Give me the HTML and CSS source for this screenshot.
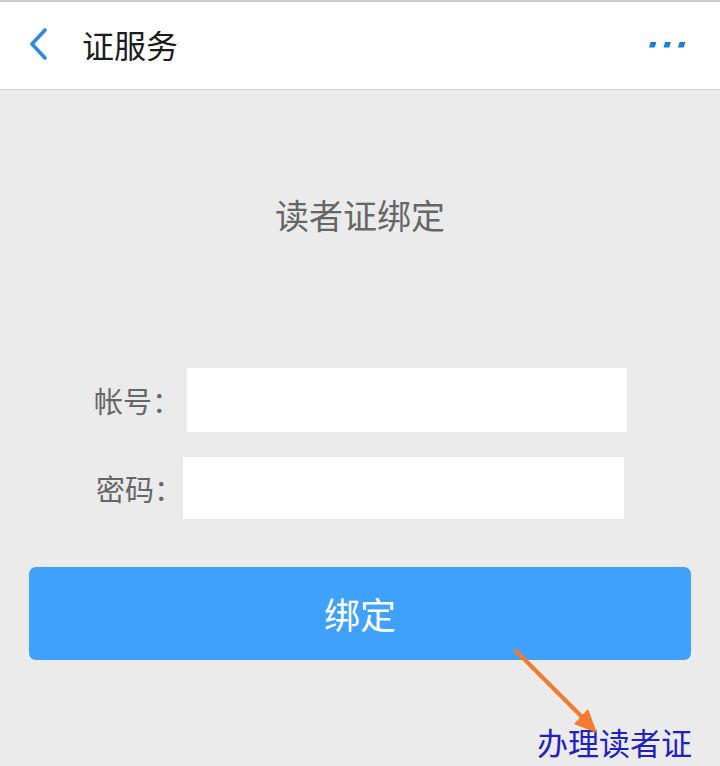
FILE: index.html
```html
<!DOCTYPE html>
<html lang="zh-CN">
<head>
<meta charset="utf-8">
<title>证服务</title>
<link rel="stylesheet" href="styles.css">
</head>
<body>
<div class="page">
  <header class="topbar">
    <svg class="back" width="20" height="32" viewBox="0 0 20 32" aria-hidden="true">
      <polyline points="16,2 3,16 16,30" fill="none" stroke="#2a8be2" stroke-width="3.6" stroke-linecap="round" stroke-linejoin="round"/>
    </svg>
    <h1 class="topbar-title">证服务</h1>
    <svg class="more" width="38" height="6" viewBox="0 0 38 6" aria-hidden="true">
      <polygon points="1.6,0 7.4,0 5.8,5.4 0,5.4" fill="#1b7fd8"/>
      <polygon points="16.1,0 21.9,0 20.3,5.4 14.5,5.4" fill="#1b7fd8"/>
      <polygon points="30.6,0 36.4,0 34.8,5.4 29,5.4" fill="#1b7fd8"/>
    </svg>
  </header>

  <main class="content">
    <h2 class="form-title">读者证绑定</h2>

    <form class="bind-form">
      <div class="field field-account">
        <label class="field-label" for="acc">帐号：</label>
        <input class="field-input" id="acc" type="text">
      </div>
      <div class="field field-password">
        <label class="field-label" for="pwd">密码：</label>
        <input class="field-input" id="pwd" type="password">
      </div>
      <button class="bind-btn" type="button">绑定</button>
    </form>

    <div class="link-row">
      <a class="apply-link" href="#">办理读者证</a>
    </div>
  </main>

  <svg class="annot-arrow" width="720" height="766" viewBox="0 0 720 766" aria-hidden="true">
    <line x1="516" y1="651" x2="584" y2="719" stroke="#f47a2c" stroke-width="4" stroke-linecap="round"/>
    <polygon points="597,733 574,724 588,709" fill="#f47a2c"/>
  </svg>
</div>
</body>
</html>
```

FILE: styles.css
```css
* {
  box-sizing: border-box;
}

html, body {
  margin: 0;
  padding: 0;
}

body {
  width: 720px;
  height: 766px;
  overflow: hidden;
  background: #ebebeb;
  font-family: "Noto Sans CJK SC", "Noto Sans", sans-serif;
}

.page {
  position: relative;
  width: 720px;
  height: 766px;
}

.topbar {
  display: flex;
  align-items: center;
  height: 90px;
  background: #ffffff;
  border-top: 2px solid #cdcdcd;
  border-bottom: 1px solid #d3d3d3;
  padding: 0 33px 4px 29px;
}

.back {
  display: block;
  flex: none;
}

.topbar-title {
  margin: 0 0 0 33px;
  font-size: 32px;
  line-height: 1;
  font-weight: 400;
  color: #1c1c1c;
}

.more {
  display: block;
  margin-left: auto;
  margin-top: 2px;
}

.content {
  display: flex;
  flex-direction: column;
}

.form-title {
  margin: 108px 0 0;
  text-align: center;
  font-size: 34px;
  line-height: 34px;
  font-weight: 400;
  color: #666666;
}

.bind-form {
  display: flex;
  flex-direction: column;
  margin-top: 136px;
}

.field {
  display: flex;
  align-items: center;
}

.field-account {
  height: 64px;
  padding-left: 94px;
}

.field-password {
  height: 62px;
  margin-top: 25px;
  padding-left: 96px;
}

.field-label {
  font-size: 29px;
  line-height: 1;
  color: #666666;
  width: 87px;
  flex: none;
  white-space: nowrap;
}

.field-input {
  height: 100%;
  width: 440px;
  border: none;
  outline: none;
  background: #ffffff;
  margin: 0;
  padding: 0 10px;
  font-size: 28px;
  font-family: inherit;
}

.field-account .field-input {
  margin-left: 6px;
}

.field-password .field-input {
  width: 441px;
}

.bind-btn {
  display: block;
  margin: 48px 29px 0;
  height: 93px;
  border: none;
  border-radius: 7px;
  background: #3ea2fd;
  color: #ffffff;
  font-family: inherit;
  font-size: 36px;
  line-height: 1;
  padding: 0 0 2px;
}

.link-row {
  display: flex;
  justify-content: flex-end;
  margin-top: 66px;
  padding-right: 28px;
}

.apply-link {
  font-size: 31px;
  line-height: 31px;
  color: #2020c4;
  text-decoration: none;
}

.annot-arrow {
  position: absolute;
  top: 0;
  left: 0;
  pointer-events: none;
}
```
